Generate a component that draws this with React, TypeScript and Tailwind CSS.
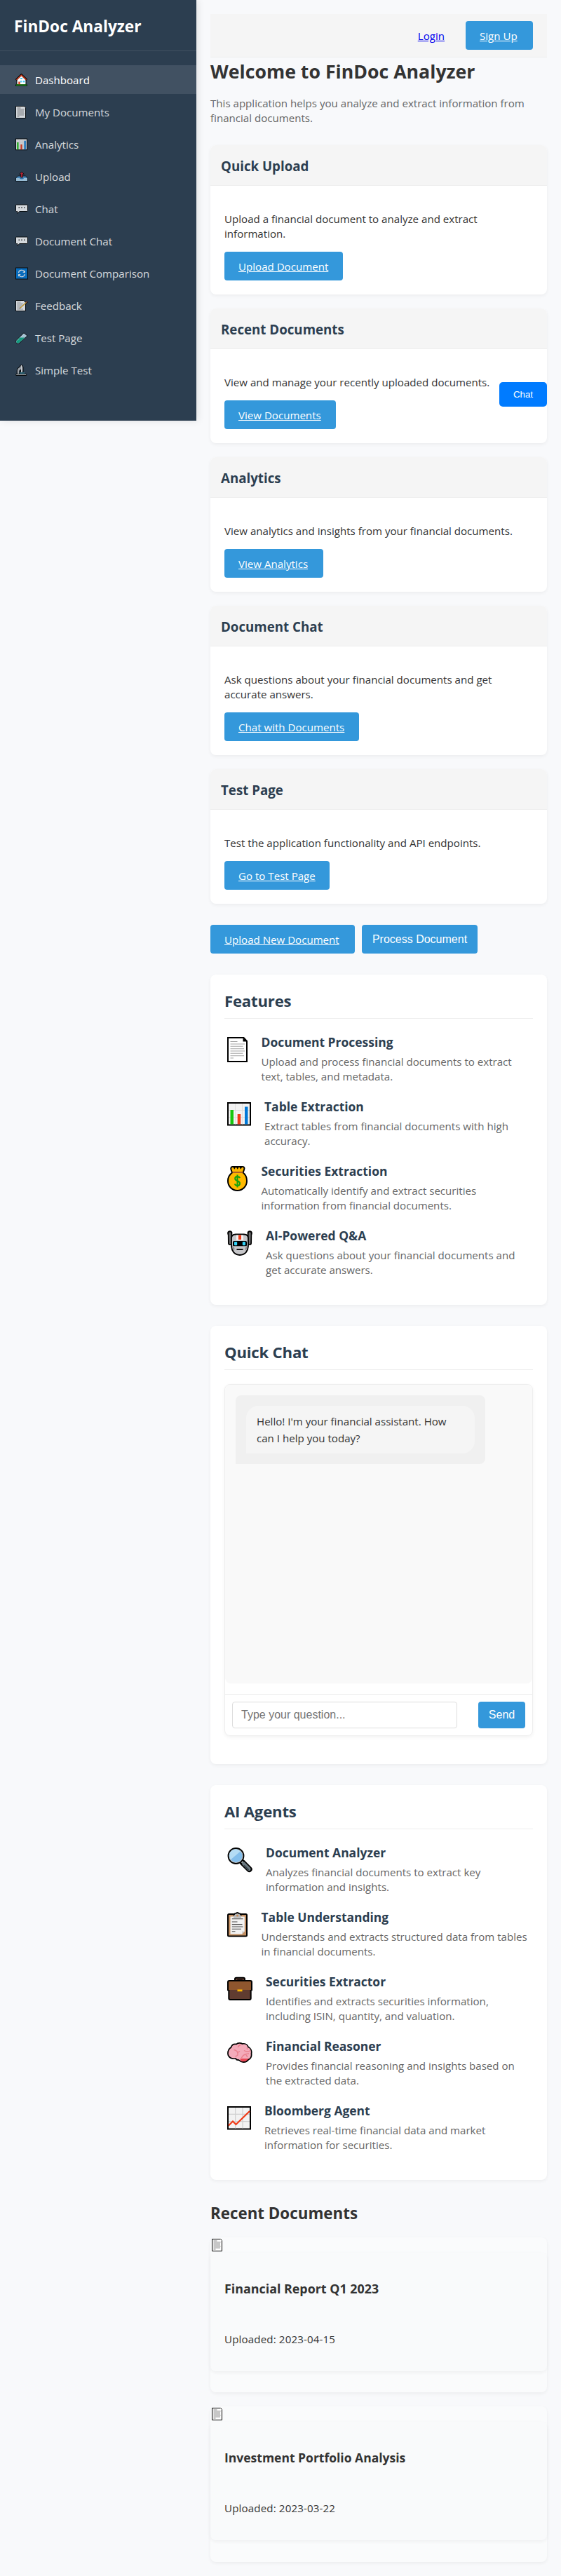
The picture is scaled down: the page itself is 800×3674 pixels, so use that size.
import type { ReactNode } from "react";

type IconProps = { className?: string };

function Svg({ className, children }: { className?: string; children: ReactNode }) {
  return (
    <svg viewBox="0 0 36 36" className={className} fill="none">
      {children}
    </svg>
  );
}

function DocIcon({ className }: IconProps) {
  return (
    <Svg className={className}>
      <path d="M1 1H23.5L28 6V35H1Z" fill="#fff" stroke="#000" strokeWidth="2" />
      <path d="M22.5 1V6.5H28Z" fill="#000" />
      <g stroke="#a6a6a6" strokeWidth="1.1">
        <path d="M4.5 6.5H14.5M4.5 10H25M4.5 13.3H22.5M4.5 16.7H24M4.5 20H25M4.5 23.3H22.5M4.5 26.7H24M4.5 30H9" />
      </g>
    </Svg>
  );
}

function SmallDocIcon({ className }: IconProps) {
  return (
    <Svg className={className}>
      <path d="M1 1H25L29 5V35H1Z" fill="#fff" stroke="#000" strokeWidth="2" />
      <path d="M5 6H15M5 10H25M5 14H24M5 18H24M5 22H25M5 26H24M5 30H11" stroke="#8f8f8f" strokeWidth="2" />
    </Svg>
  );
}

function BarsIcon({ className }: IconProps) {
  return (
    <Svg className={className}>
      <rect x="1" y="2" width="32" height="31.5" fill="#f2f2f2" stroke="#000" strokeWidth="2" />
      <path d="M11.5 3V32.5M21.5 3V32.5M2 12.5H32M2 22.5H32" stroke="#dedede" />
      <rect x="4.5" y="12" width="4.5" height="20.5" fill="#16c60c" />
      <rect x="14.7" y="18" width="4.5" height="14.5" fill="#f03a17" />
      <rect x="25" y="7.5" width="4.5" height="25" fill="#0078d7" />
    </Svg>
  );
}

function MoneyIcon({ className }: IconProps) {
  return (
    <Svg className={className}>
      <path
        d="M7 9.5L5.6 5.5C4.8 3 5.5 1 7.5 1H22C24.4 1 25 3 24 5.5L22.6 9.5C26 12 28 16.5 28 21.3C28 29 22 35 14.5 35C7 35 1 29 1 21.3C1 16.5 3.5 12 7 9.5Z"
        fill="#ffb900"
        stroke="#000"
        strokeWidth="2"
      />
      <path d="M9 1.5L10.3 3.5L11.6 1.5M13.4 1.5L14.7 3.5L16 1.5M18 1.5L19.3 3.5L20.6 1.5" stroke="#000" strokeWidth="1.3" />
      <path d="M7.5 9H22.5" stroke="#a4562b" strokeWidth="1.8" />
      <path
        d="M18 17.2C17.4 15.6 16 15 14.5 15C12.6 15 11.2 16.3 11.2 18C11.2 22 18 20.5 18 24.7C18 26.8 16.4 28 14.5 28C12.8 28 11.4 27.2 10.9 25.5M14.5 12.5V30.5"
        stroke="#13a10e"
        strokeWidth="2"
      />
    </Svg>
  );
}

function RobotIcon({ className }: IconProps) {
  return (
    <Svg className={className}>
      <path d="M3.8 3.8L4 18M32.2 3.8L32 18" stroke="#000" strokeWidth="6" strokeLinecap="round" />
      <circle cx="3.8" cy="3.8" r="3.6" fill="#000" />
      <circle cx="32.2" cy="3.8" r="3.6" fill="#000" />
      <path d="M3.8 3.8L4.2 18M32.2 3.8L31.8 18" stroke="#6e6e70" strokeWidth="3" strokeLinecap="round" />
      <path
        d="M6 11C6 7.5 8.5 5.5 12 5.5H24C27.5 5.5 30 7.5 30 11V21C30 29.5 25.5 35 18 35C10.5 35 6 29.5 6 21Z"
        fill="#c6c6c9"
        stroke="#000"
        strokeWidth="1.8"
      />
      <path d="M13 6.5H23V14H13Z" fill="#f2f2f2" />
      <path d="M16 6.5H20V13H16Z" fill="#f03a17" />
      <path d="M7 21L10.5 25L10 29C8 27 7 24 7 21ZM29 21L25.5 25L26 29C28 27 29 24 29 21Z" fill="#8f8f92" />
      <rect x="8" y="15" width="20" height="7.3" rx="1.5" fill="#000" />
      <rect x="10" y="16" width="4.2" height="5.2" rx="1" fill="#31d2f7" />
      <rect x="21.8" y="16" width="4.2" height="5.2" rx="1" fill="#31d2f7" />
      <path d="M13.5 27H22.5" stroke="#000" strokeWidth="1.8" />
    </Svg>
  );
}

function SearchIcon({ className }: IconProps) {
  return (
    <Svg className={className}>
      <path d="M22 21.5L31.5 31" stroke="#000" strokeWidth="8.2" strokeLinecap="round" />
      <path d="M23.5 23L31.2 30.8" stroke="#6b7980" strokeWidth="4.8" strokeLinecap="round" />
      <path d="M24.5 26L30 31.5" stroke="#3b464c" strokeWidth="2" strokeLinecap="round" />
      <path d="M19 18L22 21.2" stroke="#bcc4c8" strokeWidth="3" />
      <circle cx="12.5" cy="12" r="11" fill="#bcc4c8" stroke="#000" strokeWidth="1.8" />
      <circle cx="12.5" cy="12" r="9" fill="#83beec" />
      <path d="M5 17.2A9 9 0 0 1 18.8 5.5Z" fill="#b4dcf5" />
    </Svg>
  );
}

function ClipboardIcon({ className }: IconProps) {
  return (
    <Svg className={className}>
      <rect x="1" y="3" width="27" height="31.5" rx="1.5" fill="#c39063" stroke="#000" strokeWidth="2" />
      <path d="M9.5 4L11 2H12.5C13 .5 16 .5 16.5 2H18L19.5 4Z" fill="#9a9a9a" stroke="#000" strokeWidth="1.6" />
      <path d="M4.5 6.5H24.8V27.5L21 31.5H4.5Z" fill="#f2f2f2" />
      <path d="M21 31.5V27.5H24.8Z" fill="#cfcfcf" />
      <path d="M9 8.5V6.2L11.5 3H17.5L20 6.2V8.5Z" fill="#b8b8b8" />
      <circle cx="14.5" cy="5.2" r="1.4" fill="#c98a52" />
      <path d="M6.8 9.7H22.5M6.8 14H14.5M6.8 17.6H21.5M6.8 21H22.5M6.8 24.3H20M6.8 27.7H11.5" stroke="#4a4a4a" strokeWidth="1.1" />
    </Svg>
  );
}

function BriefcaseIcon({ className }: IconProps) {
  return (
    <Svg className={className}>
      <path d="M11 6V3.5C11 2.3 12 1.8 13 1.8H23C24.2 1.8 25 2.4 25 3.5V6" fill="#5c3a2e" stroke="#000" strokeWidth="2" />
      <path d="M15 6V5H21V6" stroke="#000" strokeWidth="1.6" />
      <path d="M2.3 18H33.7V31C33.7 32.3 33 33 31.8 33H4.2C3 33 2.3 32.3 2.3 31Z" fill="#603c30" stroke="#000" strokeWidth="2" />
      <path d="M1 8C1 6.7 1.8 6 3 6H33C34.2 6 35 6.7 35 8V19H1Z" fill="#8e562e" />
      <path d="M2 19.3H1V8C1 6.7 1.8 6 3 6H33C34.2 6 35 6.7 35 8V19.3H34" stroke="#000" strokeWidth="2" />
      <rect x="14.5" y="18.5" width="7" height="2.8" fill="#ffb900" />
    </Svg>
  );
}

function BrainIcon({ className }: IconProps) {
  return (
    <Svg className={className}>
      <path
        d="M5.5 9C6.5 5.5 9.5 4 13 4.5C15 2.3 19.5 2.3 21.5 4C25.5 3.2 29 5.2 30 8.5C33.5 10 35.3 14 34.5 18C35 21.5 33.5 25 30.5 26.5C28.5 29 25 30.7 22 30C19.5 30 18 28.5 16.5 27C14.5 27.3 12.8 26.5 12 25C6.5 26 1.5 23.5 1 18.5C.7 14.5 2.5 11 5.5 9Z"
        fill="#f4abba"
      />
      <path d="M18.5 25H32C30 28.5 26 30.5 22 30C20 29.5 18.5 27.5 18.5 25Z" fill="#e74856" />
      <path
        d="M9.5 12.5C13 13 15.5 15.5 15 20L11.5 22.5M15 16.5L18 14.5M15.5 9C15.5 7 17.5 6 19.5 5M24 13.5C27 15.5 31 15.5 33 13.5M28.5 12V9.5M31 18C27 18 22.5 19.5 20.5 24M26.5 19L29 23"
        stroke="#e9818f"
        strokeWidth="1.5"
      />
      <path
        d="M5.5 9C6.5 5.5 9.5 4 13 4.5C15 2.3 19.5 2.3 21.5 4C25.5 3.2 29 5.2 30 8.5C33.5 10 35.3 14 34.5 18C35 21.5 33.5 25 30.5 26.5C28.5 29 25 30.7 22 30C19.5 30 18 28.5 16.5 27C14.5 27.3 12.8 26.5 12 25C6.5 26 1.5 23.5 1 18.5C.7 14.5 2.5 11 5.5 9Z"
        stroke="#000"
        strokeWidth="1.7"
      />
    </Svg>
  );
}

function TrendIcon({ className }: IconProps) {
  return (
    <Svg className={className}>
      <rect x="1" y="2" width="32" height="31.5" fill="#f2f2f2" stroke="#000" strokeWidth="2" />
      <path d="M11.7 3V32.5M22 3V32.5M2 12.3H32M2 22.7H32" stroke="#cfcfcf" strokeWidth="1.2" />
      <path d="M2 28.5L8 22.5L12.5 27L32 8" stroke="#f03a17" strokeWidth="2.2" />
    </Svg>
  );
}

function HouseIcon({ className }: IconProps) {
  return (
    <Svg className={className}>
      <path d="M4 16L17 4L30 16V32H4Z" fill="#fff" stroke="#000" strokeWidth="2" />
      <path d="M1.5 18L17 3L32.5 18" stroke="#000" strokeWidth="5" />
      <path d="M3 17.5L17 4.5L31 17.5" stroke="#e0401f" strokeWidth="2.6" />
      <rect x="14" y="12" width="6" height="4" fill="#4cc9f5" />
      <rect x="21" y="20" width="6" height="5" fill="#4cc9f5" />
      <rect x="14" y="20" width="4" height="5" fill="#4cc9f5" />
      <rect x="8.5" y="23" width="5" height="9" fill="#e0401f" />
      <path d="M0 33H34" stroke="#000" strokeWidth="4" />
      <path d="M2 32.3H32" stroke="#16c60c" strokeWidth="2.2" />
    </Svg>
  );
}

function TrayIcon({ className }: IconProps) {
  return (
    <Svg className={className}>
      <path d="M1 22L7 16H29L35 22V31H1Z" fill="#4a96d2" stroke="#000" strokeWidth="1.6" />
      <path d="M2 22H34V30H2Z" fill="#b4dcf5" />
      <path d="M12 22H24C23 26 13 26 12 22Z" fill="#2f7fc4" />
      <path d="M18 4L24.5 10.5H20.8V20H15.2V10.5H11.5Z" fill="#d1202f" stroke="#000" strokeWidth="1.6" />
    </Svg>
  );
}

function BubbleIcon({ className }: IconProps) {
  return (
    <Svg className={className}>
      <path
        d="M3 6H33C34.3 6 35 6.7 35 8V23C35 24.3 34.3 25 33 25H11.5L5.5 31V25H3C1.7 25 1 24.3 1 23V8C1 6.7 1.7 6 3 6Z"
        fill="#fff"
        stroke="#000"
        strokeWidth="2"
      />
      <path d="M9 14.5H12M16.5 14.5H19.5M24 14.5H27" stroke="#222" strokeWidth="3" />
    </Svg>
  );
}

function SyncIcon({ className }: IconProps) {
  return (
    <Svg className={className}>
      <rect x="1" y="2" width="34" height="32" fill="#0078d7" stroke="#000" strokeWidth="2" />
      <path d="M9 16C10 8 21 6 25.5 12.5V16M27 20C26 28 15 30 10.5 23.5V20" stroke="#fff" strokeWidth="2.2" />
      <path d="M20.5 15.5H28V9ZM15.5 20.5H8V27Z" fill="#fff" />
    </Svg>
  );
}

function MemoIcon({ className }: IconProps) {
  return (
    <Svg className={className}>
      <path d="M1 3H23.5L29 8.5V33H1Z" fill="#fff" stroke="#000" strokeWidth="2" />
      <path d="M4.5 8H15M4.5 12H21M4.5 16H20M4.5 20H16M4.5 24H12M4.5 28H22" stroke="#9a9a9a" strokeWidth="1.7" />
      <path d="M29 10.5L34.5 6" stroke="#000" strokeWidth="5" />
      <path d="M13 25L31 8.5" stroke="#e0a92c" strokeWidth="3" />
      <path d="M30.5 9L34 6" stroke="#c4614b" strokeWidth="2.6" />
      <path d="M11 26.5L14.5 25L13 23.2Z" fill="#5c3a2e" />
    </Svg>
  );
}

function TubeIcon({ className }: IconProps) {
  return (
    <Svg className={className}>
      <path d="M24 3.5L34 12L12 32C8.5 35 4 34.5 2 31.5C.3 29 1 26 3.5 23.5Z" fill="#c7e4f5" stroke="#000" strokeWidth="2" />
      <path d="M12 17H27L11.5 31C8.5 33.5 5 33.3 3.3 31C2 29 2.5 26.5 4.5 24.5Z" fill="#10b08c" />
      <path d="M11 20L6 25.5" stroke="#68e0bf" strokeWidth="2" />
    </Svg>
  );
}

function ScopeIcon({ className }: IconProps) {
  return (
    <Svg className={className}>
      <path
        d="M4.5 29V20C4.5 13 9 10 13 8L14 4H20L22 10V24H15V17C12 18 11.5 20 11.5 22V29Z"
        fill="#b9bdc2"
        stroke="#000"
        strokeWidth="2.2"
      />
      <path d="M17 4V24" stroke="#f4f4f4" strokeWidth="2" />
      <path d="M12 26H26" stroke="#3cb4c9" strokeWidth="2" />
      <path d="M1.5 29H31.5V33H1.5Z" fill="#dfe2e5" stroke="#000" strokeWidth="2" />
    </Svg>
  );
}

type Icon = (p: IconProps) => ReactNode;

const nav: { label: string; icon: Icon }[] = [
  { label: "Dashboard", icon: HouseIcon },
  { label: "My Documents", icon: SmallDocIcon },
  { label: "Analytics", icon: BarsIcon },
  { label: "Upload", icon: TrayIcon },
  { label: "Chat", icon: BubbleIcon },
  { label: "Document Chat", icon: BubbleIcon },
  { label: "Document Comparison", icon: SyncIcon },
  { label: "Feedback", icon: MemoIcon },
  { label: "Test Page", icon: TubeIcon },
  { label: "Simple Test", icon: ScopeIcon },
];

const cards: { title: string; lines: string[]; action: string; width: string }[] = [
  { title: "Quick Upload", lines: ["Upload a financial document to analyze and extract", "information."], action: "Upload Document", width: "w-[169px]" },
  { title: "Recent Documents", lines: ["View and manage your recently uploaded documents."], action: "View Documents", width: "w-[159px]" },
  { title: "Analytics", lines: ["View analytics and insights from your financial documents."], action: "View Analytics", width: "w-[141px]" },
  { title: "Document Chat", lines: ["Ask questions about your financial documents and get", "accurate answers."], action: "Chat with Documents", width: "w-[192px]" },
  { title: "Test Page", lines: ["Test the application functionality and API endpoints."], action: "Go to Test Page", width: "w-[150px]" },
];

type Item = { title: string; lines: string[]; icon: Icon; col: string };

const features: Item[] = [
  { title: "Document Processing", lines: ["Upload and process financial documents to extract", "text, tables, and metadata."], icon: DocIcon, col: "w-[52.5px]" },
  { title: "Table Extraction", lines: ["Extract tables from financial documents with high", "accuracy."], icon: BarsIcon, col: "w-[57px]" },
  { title: "Securities Extraction", lines: ["Automatically identify and extract securities", "information from financial documents."], icon: MoneyIcon, col: "w-[52.5px]" },
  { title: "AI-Powered Q&A", lines: ["Ask questions about your financial documents and", "get accurate answers."], icon: RobotIcon, col: "w-[59px]" },
];

const agents: Item[] = [
  { title: "Document Analyzer", lines: ["Analyzes financial documents to extract key", "information and insights."], icon: SearchIcon, col: "w-[59px]" },
  { title: "Table Understanding", lines: ["Understands and extracts structured data from tables", "in financial documents."], icon: ClipboardIcon, col: "w-[52.5px]" },
  { title: "Securities Extractor", lines: ["Identifies and extracts securities information,", "including ISIN, quantity, and valuation."], icon: BriefcaseIcon, col: "w-[59px]" },
  { title: "Financial Reasoner", lines: ["Provides financial reasoning and insights based on", "the extracted data."], icon: BrainIcon, col: "w-[59px]" },
  { title: "Bloomberg Agent", lines: ["Retrieves real-time financial data and market", "information for securities."], icon: TrendIcon, col: "w-[57px]" },
];

const documents = [
  { title: "Financial Report Q1 2023", date: "Uploaded: 2023-04-15", size: "text-[17.86px]" },
  { title: "Investment Portfolio Analysis", date: "Uploaded: 2023-03-22", size: "text-[17.5px]" },
];

function Lines({ lines }: { lines: string[] }) {
  return (
    <>
      {lines.map((l) => (
        <span key={l} className="block whitespace-nowrap">
          {l}
        </span>
      ))}
    </>
  );
}

function LinkButton({ label, width }: { label: string; width: string }) {
  return (
    <a className={`block h-[41px] rounded bg-[#3498db] pt-[11px] pl-5 text-left whitespace-nowrap text-white underline ${width}`}>
      {label}
    </a>
  );
}

function Section({ title, height, children }: { title: string; height: string; children: ReactNode }) {
  return (
    <section className={`mb-[30px] rounded-lg bg-white p-5 shadow-[0_2px_5px_rgba(0,0,0,0.05)] ${height}`}>
      <h2 className="mb-5 h-[43px] border-b border-[#eee] pt-0.5 text-[22.2px] leading-[32px] font-bold tracking-[-0.01em] text-[#2c3e50]">
        {title}
      </h2>
      {children}
    </section>
  );
}

function ItemList({ items }: { items: Item[] }) {
  return (
    <ul>
      {items.map(({ title, lines, icon: IconCmp, col }) => (
        <li key={title} className="flex h-[92px]">
          <div className={`shrink-0 pt-1.5 pl-1 ${col}`}>
            <IconCmp className="h-9 w-9" />
          </div>
          <div className="pt-px">
            <h3 className="mb-[5px] text-[17.45px] leading-[25px] font-bold whitespace-nowrap text-[#2c3e50]">{title}</h3>
            <p className="text-[#666]">
              <Lines lines={lines} />
            </p>
          </div>
        </li>
      ))}
    </ul>
  );
}

export default function App() {
  return (
    <div className="relative flex h-[3674px] w-[800px] items-start overflow-hidden bg-[#f8f9fb] font-['Open_Sans',sans-serif] text-[15.1px] leading-[21px] text-[#333]">
      <aside className="h-[600px] w-[280px] shrink-0 bg-[#2c3e50] text-white shadow-[2px_0_10px_rgba(0,0,0,0.1)]">
        <div className="h-[73px] border-b border-white/10 pt-[22px] pl-5">
          <div className="text-[22.7px] leading-[32px] font-bold">FinDoc Analyzer</div>
        </div>
        <nav className="flex flex-col gap-[5px] pt-5">
          {nav.map(({ label, icon: IconCmp }, i) => (
            <a key={label} className={i === 0 ? "flex h-[41px] bg-white/10 pl-[22px]" : "flex h-[41px] pl-[22px]"}>
              <span className={i === 0 ? "flex" : "flex opacity-80"}>
                <IconCmp className="mt-3 mr-2.5 h-[18px] w-[18px]" />
                <span className="pt-[11px]">{label}</span>
              </span>
            </a>
          ))}
        </nav>
      </aside>

      <main className="w-[520px] p-5">
        <header className="flex h-[62px] items-start justify-end border-b border-[#eee] bg-[#f5f5f5] px-5 pt-2.5">
          <a className="mr-[30px] pt-[11px] text-[#0000ee] underline">Login</a>
          <LinkButton label="Sign Up" width="w-24" />
        </header>

        <h1 className="pt-px text-[26.7px] leading-[37px] font-bold">Welcome to FinDoc Analyzer</h1>
        <p className="mt-[17px] mb-7 text-[#666]">
          <Lines lines={["This application helps you analyze and extract information from", "financial documents."]} />
        </p>

        <div className="flex flex-col gap-5">
          {cards.map((c) => (
            <section key={c.title} className="overflow-hidden rounded-lg bg-white shadow-[0_2px_5px_rgba(0,0,0,0.05)]">
              <h3 className="h-[58px] border-b border-[#eee] bg-[#f5f5f5] pt-4 pl-[15px] text-[18.72px] leading-[27px] font-bold text-[#2c3e50]">
                {c.title}
              </h3>
              <div className="px-5 pt-[37px] pb-5">
                <p className="mb-[15px]">
                  <Lines lines={c.lines} />
                </p>
                <LinkButton label={c.action} width={c.width} />
              </div>
            </section>
          ))}
        </div>

        <div className="mt-[30px] mb-[30px] flex gap-2.5">
          <LinkButton label="Upload New Document" width="w-[206px]" />
          <button className="h-[41px] w-[165px] rounded bg-[#3498db] font-['Liberation_Sans',Arial,sans-serif] text-base text-white">
            Process Document
          </button>
        </div>

        <Section title="Features" height="h-[471px]">
          <ItemList items={features} />
        </Section>

        <Section title="Quick Chat" height="h-[625px]">
          <div className="h-[502px] rounded-lg border border-[#eee] shadow-[0_2px_5px_rgba(0,0,0,0.05)]">
            <div className="h-[426px] rounded-lg bg-[#f9f9f9] p-[15px]">
              <div className="h-[98px] w-[356px] rounded-lg rounded-bl-none bg-[#f0f0f0] p-[15px]">
                <div className="h-[68px] rounded-[18px] rounded-bl-none bg-[#f5f5f5] px-[15px] pt-2.5 leading-[24px]">
                  <Lines lines={["Hello! I'm your financial assistant. How", "can I help you today?"]} />
                </div>
              </div>
            </div>
            <div className="mt-[15px] flex justify-between border-t border-[#eee] p-2.5 font-['Liberation_Sans',Arial,sans-serif] text-base">
              <input
                placeholder="Type your question..."
                className="h-[38px] w-[321px] rounded border border-[#ddd] bg-white px-3 placeholder:text-[#757575]"
              />
              <button className="h-[38px] w-[67px] rounded bg-[#3498db] text-white">Send</button>
            </div>
          </div>
        </Section>

        <Section title="AI Agents" height="h-[563px]">
          <ItemList items={agents} />
        </Section>

        <h2 className="pt-0.5 text-[22.35px] leading-[32px] font-bold">Recent Documents</h2>
        <div className="mt-[18px] flex flex-col gap-5">
          {documents.map((d) => (
            <article key={d.title} className="h-[221.4px] rounded-lg bg-[#fafbfc] shadow-[0_2px_5px_rgba(0,0,0,0.05)]">
              <div className="h-[21.5px] pt-0.5 pl-0.5">
                <SmallDocIcon className="h-[18px] w-[18px]" />
              </div>
              <div className="h-[169.5px] rounded-lg bg-[#f9fafb] px-5 pt-[39px] shadow-[0_2px_5px_rgba(0,0,0,0.05)]">
                <h3 className={`leading-[25px] font-bold ${d.size}`}>{d.title}</h3>
                <p className="mt-[49px] tracking-[0.01em]">{d.date}</p>
              </div>
            </article>
          ))}
        </div>
      </main>

      <button className="absolute top-[545px] right-5 h-[35px] w-[68px] rounded-[5px] bg-[#007bff] font-['Liberation_Sans',Arial,sans-serif] text-[13.33px] text-white">
        Chat
      </button>
    </div>
  );
}
